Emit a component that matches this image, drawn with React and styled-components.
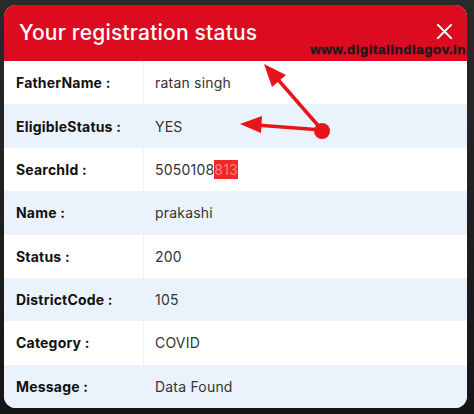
import React from "react";
import styled, { createGlobalStyle } from "styled-components";

const Global = createGlobalStyle`
  html, body { margin: 0; padding: 0; background: #1b1b1b; }
  body { font-family: Inter, "Noto Sans", sans-serif; }
`;

const Page = styled.div`
  width: 474px;
  height: 414px;
  padding: 5px 7px 6px 4px;
  box-sizing: border-box;
  background: linear-gradient(#2a2a2a, #151515);
`;

const Card = styled.div`
  position: relative;
  height: 403px;
  border-radius: 12px;
  overflow: hidden;
  background: #fff;
  display: flex;
  flex-direction: column;
`;

const Header = styled.div`
  height: 56px;
  flex: none;
  background: #dd0b1f;
  display: flex;
  align-items: center;
  justify-content: space-between;
  padding: 0 14px 1px 15px;
  box-sizing: border-box;
  position: relative;
`;

const Title = styled.h1`
  margin: 0;
  color: #fff;
  font-size: 21px;
  font-weight: 500;
  letter-spacing: 0.2px;
`;

const Close = styled.svg`
  width: 17px;
  height: 17px;
  margin-bottom: 3px;
`;

const Watermark = styled.span`
  position: absolute;
  right: 1px;
  bottom: 4px;
  font-family: "Liberation Sans", sans-serif;
  font-weight: 700;
  font-size: 13.5px;
  color: #1a1a1a;
  letter-spacing: 0.5px;
  -webkit-text-stroke: 0.4px #1a1a1a;
`;

const Rows = styled.div`
  flex: 1;
  display: grid;
  grid-template-rows: repeat(8, 1fr);
`;

const Row = styled.div`
  display: grid;
  grid-template-columns: 140px 1fr;
  align-items: stretch;
  background: ${(p) => (p.$alt ? "#eaf3fc" : "#ffffff")};
`;

const Label = styled.div`
  display: flex;
  align-items: center;
  padding-left: 12px;
  font-size: 14px;
  font-weight: 700;
  letter-spacing: 0.2px;
  color: #111;
  border-right: 1px solid ${(p) => (p.$alt ? "transparent" : "#f1f1f1")};
`;

const Value = styled.div`
  display: flex;
  align-items: center;
  padding-left: 11px;
  font-size: 14px;
  letter-spacing: 0.2px;
  color: #333;
`;

const Redact = styled.span`
  background: #f0262b;
  color: #ff8080;
  filter: blur(0.4px);
  padding: 1px 0;
`;

const Arrows = styled.svg`
  position: absolute;
  left: 0;
  top: 0;
  width: 463px;
  height: 403px;
  pointer-events: none;
`;

const data = [
  ["FatherName :", "ratan singh"],
  ["EligibleStatus :", "YES"],
  ["SearchId :", null],
  ["Name :", "prakashi"],
  ["Status :", "200"],
  ["DistrictCode :", "105"],
  ["Category :", "COVID"],
  ["Message :", "Data Found"],
];

export default function App() {
  return (
    <Page>
      <Global />
      <Card>
        <Header>
          <Title>Your registration status</Title>
          <Close viewBox="0 0 18 18">
            <path d="M2 2 L16 16 M16 2 L2 16" stroke="#fff" strokeWidth="2.2" strokeLinecap="round" />
          </Close>
          <Watermark>www.digitalindiagov.in</Watermark>
        </Header>
        <Rows>
          {data.map(([l, v], i) => (
            <Row key={l} $alt={i % 2 === 1}>
              <Label $alt={i % 2 === 1}>{l}</Label>
              <Value>
                {v === null ? (
                  <>
                    5050108<Redact>813</Redact>
                  </>
                ) : (
                  v
                )}
              </Value>
            </Row>
          ))}
        </Rows>
        <Arrows viewBox="0 0 463 403">
          <g fill="#e8141c" stroke="#e8141c">
            <line x1="318" y1="125" x2="270" y2="70" strokeWidth="3.5" />
            <polygon points="260,59 282,70 268,82" stroke="none" />
            <line x1="318" y1="125" x2="252" y2="120" strokeWidth="3.5" />
            <polygon points="236,119 258,111 257,128" stroke="none" />
            <circle cx="318" cy="126" r="8" stroke="none" />
          </g>
        </Arrows>
      </Card>
    </Page>
  );
}
